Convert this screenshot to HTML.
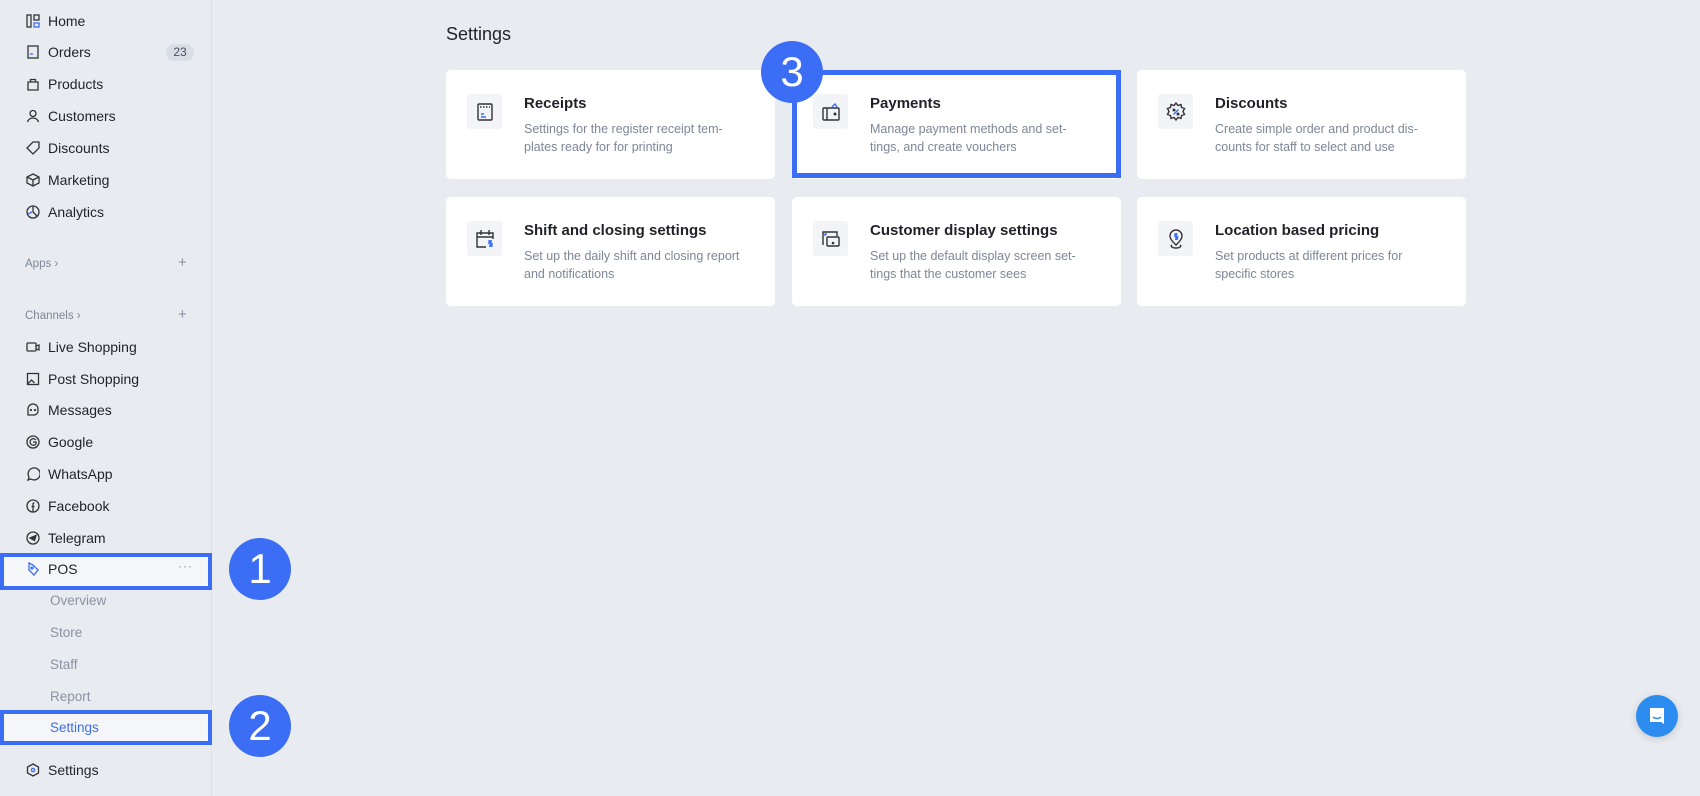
<!DOCTYPE html>
<html><head><meta charset="utf-8"><style>
*{margin:0;padding:0;box-sizing:border-box}
body{width:1700px;height:796px;background:#e8ebf0;font-family:"Liberation Sans",sans-serif;position:relative;overflow:hidden;color:#1f2329}
.sb{position:absolute;left:0;top:0;width:212px;height:796px;background:#e8ebf0;border-right:1px solid #dde1e7}
.it{position:absolute;left:26px;font-size:14px;color:#1f2329;height:20px;line-height:20px;display:flex;align-items:center}
.it svg{width:14px;height:14px;margin-right:8px;flex:none}
.sub{position:absolute;left:50px;font-size:13.5px;color:#8a93a3;line-height:20px}
.sec{position:absolute;left:25px;font-size:11.5px;color:#7d8797}
.plus{position:absolute;left:178px;font-size:15px;color:#8a93a3}
.box{position:absolute;border:4px solid #3b6ef5}
.circ{position:absolute;width:62px;height:62px;border-radius:50%;background:#3b6ef5;color:#fff;font-size:42px;text-align:center;line-height:62px;font-family:"Liberation Sans",sans-serif}
.card{position:absolute;background:#fff;border-radius:5px;width:329px;height:109px}
.ic{position:absolute;left:21px;top:24px;width:35px;height:35px;background:#f2f4f8;border-radius:3px;display:flex;align-items:center;justify-content:center}
.ic svg{width:22px;height:22px}
.ct{position:absolute;left:78px;top:25px;font-size:15px;font-weight:bold;color:#1f2329}
.cd{position:absolute;left:78px;top:50px;font-size:12.5px;color:#7d8797;line-height:18px;width:235px}
h1{position:absolute;left:446px;top:24px;font-size:18px;font-weight:normal;color:#1f2329}
</style></head><body>
<div class="sb">
<div class="it" style="top:11px"><svg viewBox="0 0 14 14" fill="none" stroke="#333" stroke-width="1.3"><rect x="1" y="1" width="4" height="12"/><rect x="8" y="1" width="5" height="5"/><path d="M8 9h5v4H8z" stroke="#3b6ef5"/></svg>Home</div>
<div class="it" style="top:42px"><svg viewBox="0 0 14 14" fill="none" stroke="#333" stroke-width="1.3"><rect x="2" y="1" width="10" height="12"/><path d="M4 9h3" stroke="#3b6ef5"/></svg>Orders</div>
<div style="position:absolute;left:166px;top:44px;width:28px;height:17px;border-radius:9px;background:#d8dde6;font-size:12px;color:#4a5260;text-align:center;line-height:17px">23</div>
<div class="it" style="top:74px"><svg viewBox="0 0 14 14" fill="none" stroke="#333" stroke-width="1.3"><path d="M2 5h10v8H2z"/><path d="M4.5 5V2.5h5V5"/></svg>Products</div>
<div class="it" style="top:106px"><svg viewBox="0 0 14 14" fill="none" stroke="#333" stroke-width="1.3"><circle cx="7" cy="4.5" r="3"/><path d="M1.5 13c1-3 3-4 5.5-4s4.5 1 5.5 4"/></svg>Customers</div>
<div class="it" style="top:138px"><svg viewBox="0 0 14 14" fill="none" stroke="#333" stroke-width="1.3"><path d="M1 7l6-6h6v6l-6 6z"/></svg>Discounts</div>
<div class="it" style="top:170px"><svg viewBox="0 0 14 14" fill="none" stroke="#333" stroke-width="1.3"><path d="M7 1l6 3v6l-6 3-6-3V4zM1 4l6 3 6-3M7 7v6"/></svg>Marketing</div>
<div class="it" style="top:202px"><svg viewBox="0 0 14 14" fill="none" stroke="#333" stroke-width="1.3"><circle cx="7" cy="7" r="6"/><path d="M7 1v6l4 4"/><path d="M2 9l4-2" stroke="#3b6ef5"/></svg>Analytics</div>
<div class="sec" style="top:258px">Apps ›</div><div class="plus" style="top:254px">+</div>
<div class="sec" style="top:310px">Channels ›</div><div class="plus" style="top:306px">+</div>
<div class="it" style="top:337px"><svg viewBox="0 0 14 14" fill="none" stroke="#333" stroke-width="1.3"><rect x="1" y="3" width="9" height="8" rx="1"/><path d="M10 6l3-1v5l-3-1"/></svg>Live Shopping</div>
<div class="it" style="top:369px"><svg viewBox="0 0 14 14" fill="none" stroke="#333" stroke-width="1.3"><rect x="1.5" y="1.5" width="11" height="11"/><path d="M1.5 12l4-4 3 3"/></svg>Post Shopping</div>
<div class="it" style="top:400px"><svg viewBox="0 0 14 14" fill="none" stroke="#333" stroke-width="1.3"><path d="M2 11V6a5 5 0 0 1 10 0v2a4 4 0 0 1-4 4H2z"/><circle cx="5" cy="7" r=".5"/><circle cx="9" cy="7" r=".5"/></svg>Messages</div>
<div class="it" style="top:432px"><svg viewBox="0 0 14 14" fill="none" stroke="#333" stroke-width="1.3"><circle cx="7" cy="7" r="6"/><path d="M10 5a3.3 3.3 0 1 0 0 4V7H7"/></svg>Google</div>
<div class="it" style="top:464px"><svg viewBox="0 0 14 14" fill="none" stroke="#333" stroke-width="1.3"><path d="M2 13l1-3a6 6 0 1 1 2 2z"/></svg>WhatsApp</div>
<div class="it" style="top:496px"><svg viewBox="0 0 14 14" fill="none" stroke="#333" stroke-width="1.3"><circle cx="7" cy="7" r="6"/><path d="M8.5 4H8a1 1 0 0 0-1 1v8M5.5 7.5h3"/></svg>Facebook</div>
<div class="it" style="top:528px"><svg viewBox="0 0 14 14" fill="none" stroke="#333" stroke-width="1.3"><circle cx="7" cy="7" r="6"/><path d="M4 7l6-2.5-1.5 5z" fill="#333"/></svg>Telegram</div>
<div style="position:absolute;left:4px;top:555px;width:204px;height:32px;background:#f5f6f8"></div>
<div class="it" style="top:559px"><svg viewBox="0 0 14 14" fill="none" stroke="#3b6ef5" stroke-width="1.3"><path d="M3 1l4 2 5 5-4 5-5-5z"/><circle cx="6" cy="6" r="1"/></svg>POS</div>
<div style="position:absolute;left:178px;top:559px;font-size:12px;color:#8a93a3;letter-spacing:1px">···</div>
<div class="box" style="left:0;top:553px;width:212px;height:37px"></div>
<div class="sub" style="top:591px">Overview</div>
<div class="sub" style="top:623px">Store</div>
<div class="sub" style="top:655px">Staff</div>
<div class="sub" style="top:687px">Report</div>
<div style="position:absolute;left:4px;top:714px;width:204px;height:27px;background:#f5f6f8"></div>
<div class="sub" style="top:718px;color:#3b6ef5">Settings</div>
<div class="box" style="left:0;top:710px;width:212px;height:35px"></div>
<div class="it" style="top:760px"><svg viewBox="0 0 14 14" fill="none" stroke="#333" stroke-width="1.3"><path d="M7 1l5.5 3v6L7 13 1.5 10V4z"/><circle cx="7" cy="7" r="1.6" stroke="#3b6ef5"/></svg>Settings</div>
</div>
<div class="circ" style="left:229px;top:538px">1</div>
<div class="circ" style="left:229px;top:695px">2</div>

<h1>Settings</h1>
<div class="card" style="left:446px;top:70px"><div class="ic"><svg viewBox="0 0 22 22" fill="none" stroke="#333" stroke-width="1.4"><rect x="4" y="3" width="14" height="16" rx="1"/><path d="M6 6h10" stroke-dasharray="1.5 1.5"/><path d="M7 13h3M7 16h5" stroke="#3b6ef5"/></svg></div><div class="ct">Receipts</div><div class="cd">Settings for the register receipt tem-<br>plates ready for for printing</div></div>
<div class="card" style="left:792px;top:70px"><div class="ic"><svg viewBox="0 0 22 22" fill="none" stroke="#333" stroke-width="1.4"><rect x="3" y="7" width="16" height="12" rx="1"/><path d="M7 7v12"/><circle cx="15" cy="13" r=".8" fill="#333"/><path d="M12 6l3-3 2 3" stroke="#3b6ef5"/></svg></div><div class="ct">Payments</div><div class="cd">Manage payment methods and set-<br>tings, and create vouchers</div></div>
<div class="card" style="left:1137px;top:70px"><div class="ic"><svg viewBox="0 0 22 22" fill="none" stroke="#333" stroke-width="1.4"><path d="M11 2l2 2.5 3-1 .5 3 3 1-1.5 3 1.5 3-3 1-.5 3-3-1-2 2.5-2-2.5-3 1-.5-3-3-1 1.5-3-1.5-3 3-1 .5-3 3 1z"/><path d="M8.5 13.5l5-5" stroke="#3b6ef5"/><circle cx="9" cy="9" r=".8" fill="#3b6ef5"/><circle cx="13" cy="13" r=".8" fill="#3b6ef5"/></svg></div><div class="ct">Discounts</div><div class="cd">Create simple order and product dis-<br>counts for staff to select and use</div></div>
<div class="card" style="left:446px;top:197px"><div class="ic"><svg viewBox="0 0 22 22" fill="none" stroke="#333" stroke-width="1.4"><path d="M12 19H3V5h16v6M3 9h16M7 2v5M15 2v5"/><path d="M18 13h-3v2.5h3V18h-3M16.5 12v7" stroke="#3b6ef5"/></svg></div><div class="ct">Shift and closing settings</div><div class="cd">Set up the daily shift and closing report<br>and notifications</div></div>
<div class="card" style="left:792px;top:197px"><div class="ic"><svg viewBox="0 0 22 22" fill="none" stroke="#333" stroke-width="1.4"><path d="M3 17V4h14v4"/><rect x="7" y="9" width="12" height="9" rx="1"/><path d="M5 8V6h2" stroke="#3b6ef5"/><circle cx="13" cy="15" r=".6" fill="#3b6ef5"/></svg></div><div class="ct">Customer display settings</div><div class="cd">Set up the default display screen set-<br>tings that the customer sees</div></div>
<div class="card" style="left:1137px;top:197px"><div class="ic"><svg viewBox="0 0 22 22" fill="none" stroke="#333" stroke-width="1.4"><path d="M11 17c-3-3-6-6-6-9a6 6 0 0 1 12 0c0 3-3 6-6 9z"/><path d="M7 17c-2 1 0 3 4 3s6-2 4-3"/><path d="M12.5 6H10v2.5h2.5V11H10M11.2 5v7" stroke="#3b6ef5"/></svg></div><div class="ct">Location based pricing</div><div class="cd">Set products at different prices for<br>specific stores</div></div>
<div class="box" style="left:792px;top:70px;width:329px;height:108px;border-width:5px"></div>
<div class="circ" style="left:761px;top:41px">3</div>
<div style="position:absolute;left:1636px;top:695px;width:42px;height:42px;border-radius:50%;background:#2d8cf0;box-shadow:0 2px 8px rgba(0,0,0,.15)"><svg viewBox="0 0 42 42" width="42" height="42"><path d="M14 13h14v16l-3-2H14z" fill="#fff"/><path d="M17 22c2 2 6 2 8 0" stroke="#2d8cf0" stroke-width="1.4" fill="none"/></svg></div>
</body></html>
